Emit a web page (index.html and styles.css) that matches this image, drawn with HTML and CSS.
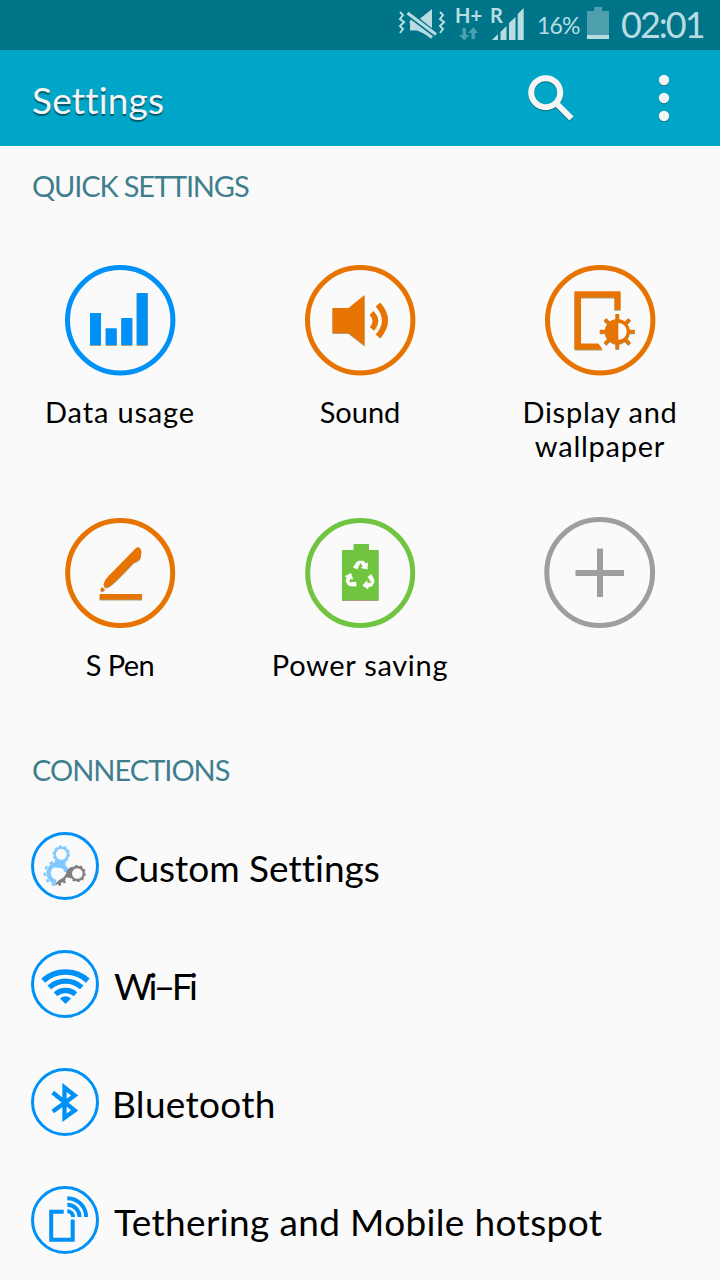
FILE: index.html
```html
<!DOCTYPE html>
<html lang="en">
<head>
    <meta charset="UTF-8">
    <meta name="viewport" content="width=device-width, initial-scale=1.0">
    <title>Settings</title>
    <link rel="stylesheet" href="styles.css">
</head>
<body>
    <div class="status-bar">
        <svg class="mute" width="48" height="32" viewBox="0 0 48 32">
            <path fill="#b9dce2" d="M12 13h7L34 1v28L19 22.500h-7z"/>
            <path d="M9 4.500L38 27.500" stroke="#007589" stroke-width="6.500"/>
            <path d="M9.500 5L38 26.500" stroke="#b9dce2" stroke-width="3"/>
            <path d="M12 13L34 29.500" stroke="#b9dce2" stroke-width="3.200"/>
            <path d="M2 4l3 3-3 4 4 3-4 4 3 3-3 4M42 4l3 3-3 4 4 3-4 4 3 3-3 4" fill="none" stroke="#b9dce2" stroke-width="2"/>
        </svg>
        <div class="network">
            <span>H+</span>
            <svg width="20" height="14" viewBox="0 0 20 14">
                <path fill="#4d9fae" d="M3.500 1h3.500v7h3l-4.500 5.500L0 8h3.500zM12.500 12h3.500V6h3l-4.500-6L9 6h3.500z"/>
            </svg>
        </div>
        <div class="signal">
            <span>R</span>
            <svg width="34" height="32" viewBox="0 0 34 32">
                <path fill="#b9dce2" d="M2 32l6-6v6zM10.500 24l6-6v14h-6zM19 15l6.500-6v23H19zM27.700 6l6-6v32h-6z"/>
            </svg>
        </div>
        <span class="percent">16%</span>
        <svg class="battery" width="22" height="32" viewBox="0 0 22 32">
            <path fill="#4d9fae" d="M0 4h7V0h8v4h7v24H0z"/>
            <path fill="#b9dce2" d="M0 28h22v4H0z"/>
        </svg>
        <span class="clock">02:01</span>
    </div>

    <div class="header">
        <h1>Settings</h1>
        <svg class="search" width="48" height="48" viewBox="0 0 48 48">
            <circle cx="18.700" cy="18.700" r="14.500" fill="none" stroke="#f5f5f5" stroke-width="6"/>
            <path d="M28.500 28.500L44.500 44.500" stroke="#f5f5f5" stroke-width="6"/>
        </svg>
        <svg class="more" width="12" height="48" viewBox="0 0 12 48">
            <g fill="#f5f5f5">
                <circle cx="6" cy="6" r="5.200"/>
                <circle cx="6" cy="24" r="5.200"/>
                <circle cx="6" cy="42" r="5.200"/>
            </g>
        </svg>
    </div>

    <h2 class="quick-title">QUICK SETTINGS</h2>
    <div class="quick">
        <div class="tile blue">
            <svg width="112" height="112" viewBox="0 0 112 112">
                <circle class="ring" cx="56.200" cy="56.200" r="52.700"/>
                <path class="glyph" d="M26 49h11v32H26zM41.700 64.300h11V81h-11zM57.300 54h11v27h-11zM72.700 29h11v52h-11z"/>
            </svg>
            <span class="data">Data usage</span>
        </div>
        <div class="tile orange">
            <svg width="112" height="112" viewBox="0 0 112 112">
                <circle class="ring" cx="56.200" cy="56.200" r="52.700"/>
                <path class="glyph" d="M28.500 44h16L60.500 31v50.500L44.500 69h-16z"/>
                <path class="wave" stroke-width="5.500" d="M67.500 49q7.500 7.500 0.500 16"/>
                <path class="wave" stroke-width="6" d="M74 40.500q14 16 0 32"/>
            </svg>
            <span class="sound">Sound</span>
        </div>
        <div class="tile orange">
            <svg width="112" height="112" viewBox="0 0 112 112">
                <circle class="ring" cx="56.200" cy="56.200" r="52.700"/>
                <g class="glyph">
                    <path d="M30.500 27.300h46v18.500h-6V33.500h-33.500v46h17.500l4 6H30.500z"/>
                    <circle cx="73.300" cy="67.500" r="12.500"/>
                    <path class="teeth" d="M73.300 50v35M55.800 67.500h35M61 55.200l24.600 24.600M61 79.800l24.600-24.600"/>
                </g>
                <path fill="#fafafa" d="M74.300 59a8.500 8.500 0 0 1 0 17z"/>
            </svg>
            <span class="display">Display and<br>wallpaper</span>
        </div>
        <div class="tile orange">
            <svg width="112" height="112" viewBox="0 0 112 112">
                <circle class="ring" cx="56.200" cy="56" r="52.500"/>
                <path class="glyph" d="M35.700 77H78v5.500H35.700zM74 30q3.300 1 3.300 4.500 0 5-1.300 7.500l-3.300 2.500-2.700 1L54.500 61.500q-4 4-8.500 7.500-3 1.500-5 1.500l-1.500-3.500q1.500-5 5.500-8.500L70.500 32.500q2-2.500 3.500-2.500zM38 70l3 2.500-3 2-1.800-1.800z"/>
            </svg>
            <span class="pen">S Pen</span>
        </div>
        <div class="tile green">
            <svg width="112" height="112" viewBox="0 0 112 112">
                <circle class="ring" cx="56.200" cy="56" r="52.500"/>
                <path class="glyph" d="M38 33h11.700v-6H65v6h9.500v50H38z"/>
                <g fill="#fafafa">
                    <path id="arrow" d="M49 50.500l3.500-5.500 2.300-1.300h4.700l2.500 2.800 2-1.200-0.500 7.200-7-1.500 2.200-1.500-2.200-3.500-3.200 6.500z"/>
                    <use href="#arrow" transform="rotate(120 56.300 59)"/>
                    <use href="#arrow" transform="rotate(240 56.300 59)"/>
                </g>
            </svg>
            <span class="power">Power saving</span>
        </div>
        <div class="tile gray">
            <svg width="112" height="112" viewBox="0 0 112 112">
                <circle class="ring" cx="55.700" cy="55.500" r="52.900"/>
                <path class="plus" d="M31.500 56h48.500M56 31.500v48.500"/>
            </svg>
        </div>
    </div>

    <h2 class="connections-title">CONNECTIONS</h2>
    <div class="list">
        <div class="item">
            <svg width="68" height="68" viewBox="0 0 68 68">
                <circle class="ring" cx="34" cy="34" r="32.500"/>
                <g fill="none" stroke="#80c8ff">
                    <path stroke-width="11" d="M29.500 28.500l-1 7.500"/>
                    <circle cx="30.300" cy="22.300" r="5.700" fill="#fafafa" stroke="none"/>
                    <circle cx="30.300" cy="22.300" r="6.700" stroke-width="2.400"/>
                    <circle cx="30.300" cy="22.300" r="8" stroke-width="1.600" stroke-dasharray="2.500 2.530"/>
                    <path stroke-width="4.500" d="M25 50A9 9 0 1 1 35.500 40"/>
                    <path stroke-width="2.200" stroke-dasharray="3.500 3.500" d="M24 52.900A11.700 11.700 0 0 1 26 29.600"/>
                </g>
                <path fill="#808080" d="M24 53.500q1.500-5 7-7 4-3 4.500-7 1-3 5-4.500l1.500 1v9q-4 1-7 0.500l-1 3 1 2-2 1-1.500-1.500-1.500 1 0 2.500-2 0.500-1-2z"/>
                <circle cx="46.300" cy="41.500" r="5.500" fill="#fafafa"/>
                <g fill="none" stroke="#808080">
                    <circle cx="46.300" cy="41.500" r="6.500" stroke-width="2.400"/>
                    <circle cx="46.300" cy="41.500" r="7.800" stroke-width="1.600" stroke-dasharray="2.400 2.500"/>
                </g>
            </svg>
            <span class="custom">Custom Settings</span>
        </div>
        <div class="item">
            <svg width="68" height="68" viewBox="0 0 68 68">
                <circle class="ring" cx="34" cy="34" r="32.500"/>
                <g class="line">
                    <path stroke-width="5.600" d="M12.200 30.600a33 33 0 0 1 44.600 0"/>
                    <path stroke-width="5.300" d="M18.200 37.400a24.200 24.200 0 0 1 32.600 0"/>
                    <path stroke-width="5.300" d="M24.500 44.300a15 15 0 0 1 20 0"/>
                </g>
                <path fill="#0091f8" d="M29 48.500q5.500-4.500 11 0L34.500 54z"/>
            </svg>
            <span class="wifi">Wi&#8211;Fi</span>
        </div>
        <div class="item">
            <svg width="68" height="68" viewBox="0 0 68 68">
                <circle class="ring" cx="34" cy="34" r="32.500"/>
                <path class="line" stroke-width="4.300" d="M21.700 24.500L43.700 42.300l-10.200 7.500V19.500L43.700 27.500 21.700 43.500"/>
            </svg>
            <span class="bluetooth">Bluetooth</span>
        </div>
        <div class="item">
            <svg width="68" height="68" viewBox="0 0 68 68">
                <circle class="ring" cx="34" cy="34" r="32.500"/>
                <path class="line" stroke-width="4" d="M32.700 25.800H20.200v28h21.500V33.500"/>
                <path class="line" stroke-width="4" d="M36.300 12.200a18.800 18.800 0 0 1 18.800 18.800M36.300 18.700a12.300 12.300 0 0 1 12.300 12.300M36.300 25.200a5.800 5.800 0 0 1 5.800 5.800"/>
            </svg>
            <span class="tether">Tethering and Mobile hotspot</span>
        </div>
    </div>
</body>
</html>
```
FILE: styles.css
```css
* {
    box-sizing: border-box;
}
body {
    margin: 0;
    height: 1280px;
    overflow: hidden;
    background-color: #fafafa;
    color: #000;
    font-family: Lato, "Liberation Sans", sans-serif;
    font-variant-ligatures: none;
}
svg {
    display: block;
    flex: none;
}
h1, h2 {
    margin: 0;
    font-weight: 400;
}

.status-bar {
    display: flex;
    height: 50px;
    padding-left: 398px;
    background-color: #007589;
    color: #b9dce2;
    white-space: nowrap;
}
.mute {
    margin-top: 8px;
}
.network {
    width: 34px;
    padding: 5px 0 0 9px;
    font-size: 20px;
    font-weight: 700;
    line-height: 20px;
}
.network svg {
    margin: 2px 0 0 4px;
}
.signal {
    display: flex;
    width: 44px;
    padding: 5px 0 0 10px;
    font-size: 20px;
    font-weight: 700;
    line-height: 20px;
}
.signal span {
    width: 0;
}
.signal svg {
    margin-top: 3px;
}
.percent {
    width: 49px;
    padding-left: 13px;
    font-size: 23px;
    line-height: 50px;
    letter-spacing: -0.8px;
}
.battery {
    margin: 7px 12px 0 14px;
}
.clock {
    font-size: 36px;
    line-height: 48px;
    letter-spacing: -2px;
}

.header {
    display: flex;
    align-items: center;
    height: 96px;
    padding: 0 50px 0 32px;
    background-color: #00a6c7;
}
.header h1 {
    flex: 1;
    padding-top: 3px;
    color: #f5f5f5;
    font-size: 37px;
    line-height: 48px;
    letter-spacing: 0.2px;
    text-shadow: 0 2px 1px #00586a;
}
.header svg {
    filter: drop-shadow(0 1px 0 #006d82);
}
.search {
    margin-right: 83px;
}

h2 {
    padding-left: 32px;
    color: #3f7f8d;
    font-size: 29px;
    line-height: 40px;
}
.quick-title {
    margin-top: 20px;
    letter-spacing: -1.15px;
}
.connections-title {
    letter-spacing: -1px;
}

.quick {
    display: grid;
    grid-template-columns: repeat(3, 240px);
    grid-template-rows: 253px 233px;
    margin-top: 58px;
}
.tile {
    display: flex;
    flex-direction: column;
    align-items: center;
    gap: 19px;
    font-size: 29px;
    line-height: 34px;
    text-align: center;
    white-space: nowrap;
}
.blue { color: #0091f8; }
.orange { color: #e77400; }
.green { color: #70c43f; }
.gray { color: #9e9e9e; }
.tile span {
    color: #000;
}
.data {
    letter-spacing: 0.85px;
}
.display {
    letter-spacing: 0.75px;
}
.pen {
    letter-spacing: -0.6px;
}
.power {
    letter-spacing: 0.7px;
}
.ring {
    fill: none;
    stroke: currentColor;
    stroke-width: 5;
}
.glyph {
    fill: currentColor;
    filter: drop-shadow(0 1px 0 rgba(90, 60, 0, 0.5));
}
.teeth {
    stroke: currentColor;
    stroke-width: 3.6;
}
.wave {
    fill: none;
    stroke: currentColor;
}
.plus {
    stroke: currentColor;
    stroke-width: 6;
}

.list {
    margin-top: 17px;
}
.item {
    display: flex;
    align-items: center;
    gap: 15px;
    height: 118px;
    padding-left: 31px;
    font-size: 37px;
    white-space: nowrap;
}
.item span {
    padding-top: 2px;
}
.item .ring {
    stroke: #0091f8;
    stroke-width: 3;
}
.line {
    fill: none;
    stroke: #0091f8;
}
.item .wifi {
    letter-spacing: -3.6px;
}
.item .bluetooth {
    margin-left: -2px;
    letter-spacing: 0.3px;
}
.tether {
    letter-spacing: 0.35px;
}
```
